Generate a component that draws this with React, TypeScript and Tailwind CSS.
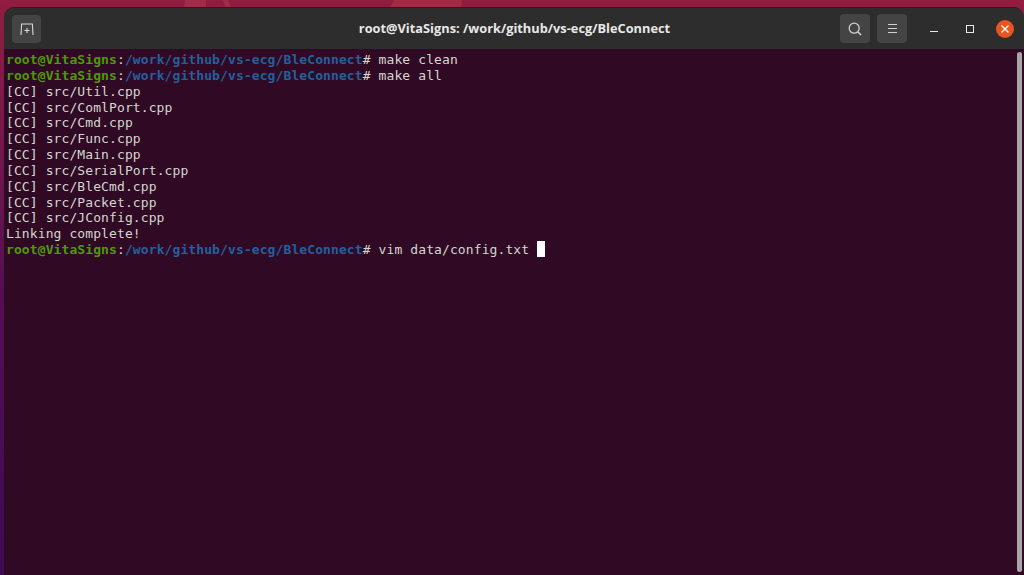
import React from 'react';

const Prompt = ({ cmd }: { cmd: string }) => (
  <div>
    <span className="text-[#4e9a06] font-bold">root@VitaSigns</span>
    <span>:</span>
    <span className="text-[#245f9e] font-bold">/work/github/vs-ecg/BleConnect</span>
    <span># {cmd}</span>
  </div>
);

const files = ['Util', 'ComlPort', 'Cmd', 'Func', 'Main', 'SerialPort', 'BleCmd', 'Packet', 'JConfig'];

export default function App() {
  return (
    <div className="relative h-[575px] w-[1024px] overflow-hidden bg-gradient-to-b from-[#931c40] via-[#560e52] to-[#3d0a55] pl-[4px] pt-[7px]">
      {/* wallpaper facets above the window */}
      <svg className="absolute left-0 top-0" width="1024" height="8" viewBox="0 0 1024 8">
        <path d="M185 0 H206 V8 H184 Z" fill="#a52a48" />
        <path d="M223 0 H228 L231 8 H226 Z" fill="#a52a48" />
        <path d="M394 0 H462 L461 8 H390 Z" fill="#a62843" />
      </svg>
      <div className="relative flex h-[568px] flex-col overflow-hidden rounded-t-[10px] border-t border-[#1f1f1f]">
        {/* Title bar */}
        <div className="grid h-[41px] shrink-0 grid-cols-[1fr_auto_1fr] items-center bg-[#2d2d2d] pl-[8px] pr-[10px]">
          <button className="flex h-[28px] w-[29px] items-center justify-center rounded-[4px] bg-[#444444]">
            <svg width="16" height="14" viewBox="0 0 16 14" fill="none" stroke="#d8d8d8" strokeWidth="1.1">
              <path d="M2 13 L2.6 2 H13.4 L14 13" />
              <path d="M5.5 8.5 H10.5 M8 6 V11" />
            </svg>
          </button>
          <div className="ml-[3px] text-center font-['Open_Sans',sans-serif] text-[12.8px] font-bold text-[#e8e8e8]">
            root@VitaSigns: /work/github/vs-ecg/BleConnect
          </div>
          <div className="flex items-center justify-end">
            <button className="flex h-[29px] w-[30px] items-center justify-center rounded-[4px] bg-[#444444]">
              <svg width="14" height="14" viewBox="0 0 14 14" fill="none" stroke="#d0d0d0" strokeWidth="1.3">
                <circle cx="6.2" cy="6.2" r="5" />
                <path d="M10 10 L13 13" strokeWidth="1.6" />
              </svg>
            </button>
            <button className="ml-[7px] flex h-[29px] w-[30px] items-center justify-center rounded-[4px] bg-[#444444]">
              <svg width="9" height="9" viewBox="0 0 9 9" fill="none" stroke="#d0d0d0" strokeWidth="1">
                <path d="M0 0.5 H9 M0 4.5 H9 M0 8.5 H9" />
              </svg>
            </button>
            <div className="ml-[18px] flex w-[18px] justify-center">
              <svg width="8" height="8" viewBox="0 0 8 8" fill="none" stroke="#e8e8e8" strokeWidth="1">
                <path d="M0 6.5 H8" />
              </svg>
            </div>
            <div className="ml-[17.5px] flex w-[18px] justify-center">
              <svg width="8" height="8" viewBox="0 0 8 8" fill="none" stroke="#e8e8e8" strokeWidth="1">
                <rect x="0.5" y="0.5" width="7" height="7" />
              </svg>
            </div>
            <div className="ml-[17.5px] flex h-[18px] w-[18px] items-center justify-center rounded-full bg-[#e95420]">
              <svg width="8" height="8" viewBox="0 0 8 8" fill="none" stroke="#ffffff" strokeWidth="1.4">
                <path d="M0.5 0.5 L7.5 7.5 M7.5 0.5 L0.5 7.5" />
              </svg>
            </div>
          </div>
        </div>
        {/* Terminal */}
        <div className="relative flex-1 bg-[#300a24] px-[2px] pt-[3px] font-['DejaVu_Sans_Mono',monospace] text-[13px] leading-[15.85px] tracking-[0.1px] whitespace-pre text-[#d3d7cf]">
          <Prompt cmd="make clean" />
          <Prompt cmd="make all" />
          {files.map((f) => (
            <div key={f}>[CC] src/{f}.cpp</div>
          ))}
          <div>Linking complete!</div>
          <div className="flex items-center">
            <Prompt cmd="vim data/config.txt " />
            <span className="-mt-[2px] h-[16px] w-[8px] bg-white" />
          </div>
          <div className="absolute right-[2px] top-[3px] bottom-[3px] w-[5px] rounded-full bg-[#a9a6a8]" />
        </div>
      </div>
    </div>
  );
}
